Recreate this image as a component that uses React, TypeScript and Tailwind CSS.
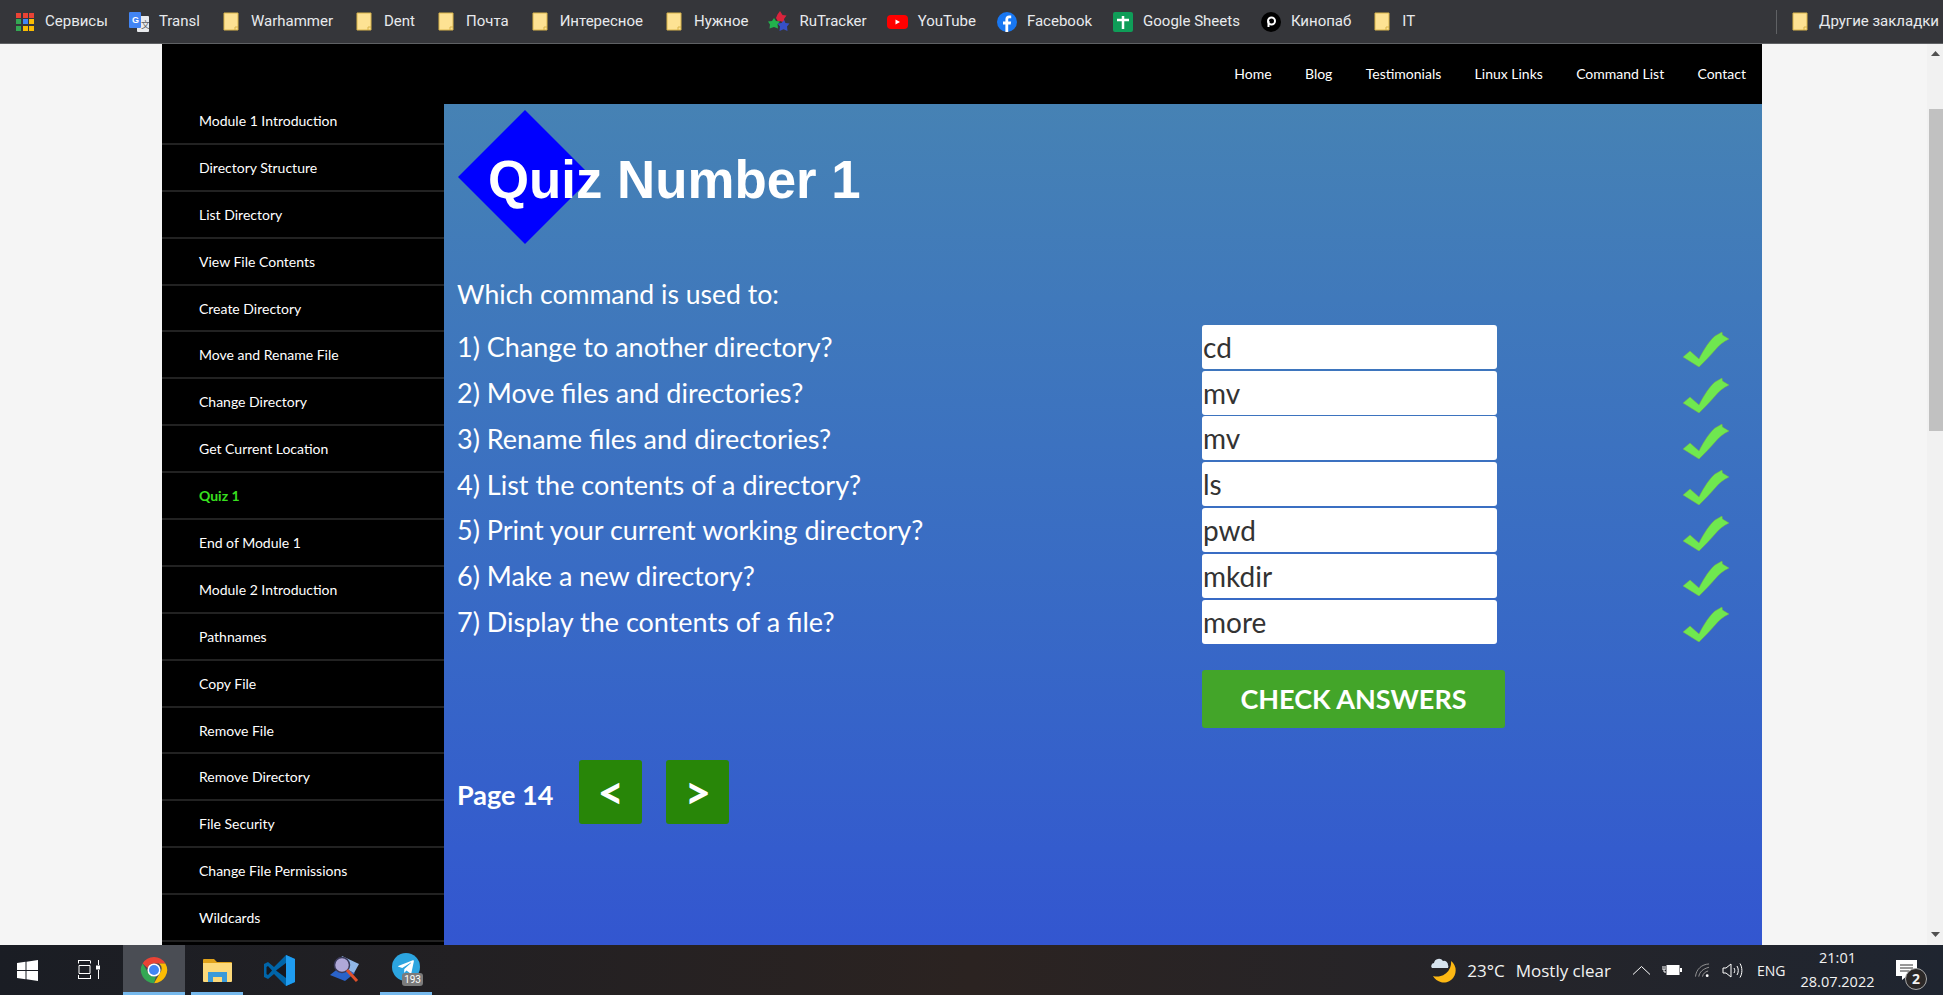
import { FaTelegramPlane } from 'react-icons/fa';

const bookmarks: { label: string; icon: string }[] = [
  { label: 'Сервисы', icon: 'apps' },
  { label: 'Transl', icon: 'translate' },
  { label: 'Warhammer', icon: 'folder' },
  { label: 'Dent', icon: 'folder' },
  { label: 'Почта', icon: 'folder' },
  { label: 'Интересное', icon: 'folder' },
  { label: 'Нужное', icon: 'folder' },
  { label: 'RuTracker', icon: 'rutracker' },
  { label: 'YouTube', icon: 'youtube' },
  { label: 'Facebook', icon: 'facebook' },
  { label: 'Google Sheets', icon: 'sheets' },
  { label: 'Кинопаб', icon: 'kinopub' },
  { label: 'IT', icon: 'folder' },
];

const sideLinks = [
  'Module 1 Introduction',
  'Directory Structure',
  'List Directory',
  'View File Contents',
  'Create Directory',
  'Move and Rename File',
  'Change Directory',
  'Get Current Location',
  'Quiz 1',
  'End of Module 1',
  'Module 2 Introduction',
  'Pathnames',
  'Copy File',
  'Remove File',
  'Remove Directory',
  'File Security',
  'Change File Permissions',
  'Wildcards',
];

const topLinks = ['Home', 'Blog', 'Testimonials', 'Linux Links', 'Command List', 'Contact'];

const questions = [
  { q: '1) Change to another directory?', a: 'cd' },
  { q: '2) Move files and directories?', a: 'mv' },
  { q: '3) Rename files and directories?', a: 'mv' },
  { q: '4) List the contents of a directory?', a: 'ls' },
  { q: '5) Print your current working directory?', a: 'pwd' },
  { q: '6) Make a new directory?', a: 'mkdir' },
  { q: '7) Display the contents of a file?', a: 'more' },
];

function FolderIcon() {
  return (
    <svg width="16" height="19" viewBox="0 0 16 19" className="shrink-0">
      <path d="M1 1h14v17H1z" fill="#fde293" stroke="#d9b44a" strokeWidth="1" />
      <path d="M12 18v-3h3" fill="none" stroke="#d9b44a" strokeWidth="1" />
    </svg>
  );
}

function BookmarkIcon({ name }: { name: string }) {
  if (name === 'folder') return <FolderIcon />;
  if (name === 'apps') {
    const colors = ['#ea4335', '#ea4335', '#ea4335', '#34a853', '#4285f4', '#fbbc04', '#34a853', '#fbbc04', '#fbbc04'];
    return (
      <div className="grid grid-cols-3 gap-[1.5px] w-[18px] h-[18px] shrink-0">
        {colors.map((c, i) => (
          <span key={i} style={{ background: c }} />
        ))}
      </div>
    );
  }
  if (name === 'translate') {
    return (
      <svg width="20" height="20" viewBox="0 0 20 20" className="shrink-0">
        <rect x="8" y="4" width="12" height="16" rx="1" fill="#e8eaed" />
        <rect x="0" y="0" width="12" height="16" rx="1" fill="#4285f4" />
        <text x="3" y="11" fontSize="9" fontWeight="700" fill="#fff" fontFamily="'Liberation Sans', sans-serif">G</text>
        <text x="12" y="16" fontSize="9" fill="#5f6368" fontFamily="'Noto Sans CJK SC', sans-serif">文</text>
      </svg>
    );
  }
  if (name === 'rutracker') {
    return (
      <svg width="22" height="22" viewBox="0 0 22 22" className="shrink-0">
        <path d="M12 0l2.500 4 4 .5-2.500 3.500.5 3.500-4.500-1.500-2 .5-2-3.500 1.500-3.500z" fill="#d9243c" />
        <path d="M6 7l2 3 4 .5-2.500 3 .5 4-4-1.500-4.500 1.500.5-4L0 10.500l4-.5z" fill="#22b24c" />
        <path d="M16 9l1.500 3 4 .5-2.500 3 .5 4.500-4-1.800-4 1.800.5-4.500-2.500-3 4-.5z" fill="#3650c8" />
      </svg>
    );
  }
  if (name === 'youtube') {
    return (
      <svg width="21" height="20" viewBox="0 0 21 20" className="shrink-0">
        <rect x="0" y="3" width="21" height="14" rx="4" fill="#f00" />
        <path d="M8.500 7.500l4.500 2.500-4.500 2.500z" fill="#fff" />
      </svg>
    );
  }
  if (name === 'facebook') {
    return (
      <svg width="20" height="20" viewBox="0 0 20 20" className="shrink-0">
        <circle cx="10" cy="10" r="10" fill="#1877f2" />
        <path d="M11.200 20v-7.500h2.500l.4-3h-2.900V7.700c0-.9.300-1.400 1.500-1.400h1.500V3.600c-.4 0-1.200-.1-2.100-.1-2.200 0-3.700 1.300-3.700 3.800v2.200H6v3h2.400V20z" fill="#fff" />
      </svg>
    );
  }
  if (name === 'sheets') {
    return (
      <svg width="20" height="20" viewBox="0 0 20 20" className="shrink-0">
        <rect x="0" y="0" width="20" height="20" rx="2" fill="#0f9d58" />
        <path d="M4 8h12M10 4v13" stroke="#fff" strokeWidth="2.500" />
      </svg>
    );
  }
  return (
    <svg width="20" height="20" viewBox="0 0 20 20" className="shrink-0">
      <circle cx="10" cy="10" r="10" fill="#000" />
      <circle cx="10.500" cy="9" r="3.500" fill="none" stroke="#fff" strokeWidth="2" />
      <path d="M7.500 9v6" stroke="#fff" strokeWidth="2" />
    </svg>
  );
}

function BookmarksBar() {
  return (
    <div className="h-[44px] shrink-0 bg-[#35363a] border-b border-b-[#5f6164] flex items-center pl-[15px] pr-[4px] text-[#e8eaed] text-[15px] font-['Roboto',sans-serif]">
      <div className="flex items-center gap-[21px]">
        {bookmarks.map((b) => (
          <div key={b.label} className="flex items-center gap-[10px]">
            <div className="w-[20px] flex justify-center">
              <BookmarkIcon name={b.icon} />
            </div>
            <span>{b.label}</span>
          </div>
        ))}
      </div>
      <div className="ml-auto flex items-center gap-[15px]">
        <span className="w-px h-[24px] bg-[#5f6164]" />
        <div className="flex items-center gap-[11px]">
          <FolderIcon />
          <span>Другие закладки</span>
        </div>
      </div>
    </div>
  );
}

function CheckMark() {
  return (
    <svg width="46" height="35" viewBox="0 0 46 35">
      <path
        d="M0 25L7 19 16 27C21 17 27 8 32 4L39 0 39.500 3 46 7C40 10 36 13 33 17 27 24 21 30 16 35Z"
        fill="#6fe84f"
        stroke="#7fae44"
        strokeWidth="0.500"
      />
    </svg>
  );
}

function Sidebar() {
  return (
    <nav className="w-[282px] shrink-0 bg-black -mt-[6px]">
      {sideLinks.map((l) => (
        <div
          key={l}
          className={`h-[46.900px] flex items-center pl-[37px] border-b-2 border-b-[#222222] text-[14px] ${
            l === 'Quiz 1' ? 'text-[#38e01f] font-bold' : 'text-white'
          }`}
        >
          {l}
        </div>
      ))}
    </nav>
  );
}

function Quiz() {
  return (
    <main className="flex-1 h-[841px] bg-gradient-to-b from-[#4682b4] to-[#3356d0] pl-[13px] pr-[33px] text-white">
      <div className="relative h-[176px] pt-[48px] pl-[31px]">
        <svg width="134" height="134" viewBox="0 0 134 134" className="absolute left-[1px] top-[6px]">
          <path d="M67 0l67 67-67 67L0 67z" fill="#0000ff" />
        </svg>
        <h1 className="relative font-['Liberation_Sans',sans-serif] font-bold text-[52.800px] leading-[56px]">Quiz Number 1</h1>
      </div>
      <p className="text-[26.600px] leading-[34px] -mt-[3px] mb-[13px]">Which command is used to:</p>
      <div className="flex flex-col">
        {questions.map((row) => (
          <div key={row.q} className="h-[45.800px] flex items-center">
            <div className="w-[745px] text-[27px] pt-[1px]">{row.q}</div>
            <input
              readOnly
              value={row.a}
              className="w-[295px] h-[44px] bg-white rounded-[3px] px-[1px] text-[28px] text-[#333] font-['Lato',sans-serif] outline-none"
            />
            <div className="ml-auto pt-[6px]">
              <CheckMark />
            </div>
          </div>
        ))}
      </div>
      <div className="pl-[745px] mt-[25px]">
        <button className="w-[303px] h-[58px] bg-[#43a529] rounded-[3px] text-[27px] font-bold pt-[1px]">CHECK ANSWERS</button>
      </div>
      <div className="flex items-center mt-[32px] h-[64px]">
        <span className="text-[27px] font-bold pt-[7px]">Page 14</span>
        <button className="ml-[26px] w-[63px] h-[64px] bg-[#288608] rounded-[3px] text-[46px] leading-none font-bold pt-[1px]">&lt;</button>
        <button className="ml-[24px] w-[63px] h-[64px] bg-[#288608] rounded-[3px] text-[46px] leading-none font-bold pt-[1px]">&gt;</button>
      </div>
    </main>
  );
}

function Scrollbar() {
  return (
    <div className="w-[16px] h-full bg-[#f1f1f1] flex flex-col items-end">
      <div className="h-[18px] w-full flex items-center justify-center">
        <svg width="9" height="5" viewBox="0 0 9 5"><path d="M4.500 0L9 5H0z" fill="#505050" /></svg>
      </div>
      <div className="mt-[47px] w-[14px] h-[322px] bg-[#c1c1c1]" />
      <div className="mt-auto h-[22px] w-full flex items-center justify-center">
        <svg width="9" height="5" viewBox="0 0 9 5"><path d="M0 0h9L4.500 5z" fill="#505050" /></svg>
      </div>
    </div>
  );
}

function TaskbarIcons() {
  return (
    <div className="flex items-stretch h-full">
      <div className="w-[55px] flex items-center justify-center">
        <svg width="21" height="21" viewBox="0 0 21 21"><path d="M0 3l8.500-1.200v8.200H0zM9.500 1.700L21 0v10H9.500zM0 11h8.500v8.200L0 18zM9.500 11H21v10L9.500 19.300z" fill="#fff" /></svg>
      </div>
      <div className="w-[68px] flex items-center justify-center">
        <svg width="22" height="20" viewBox="0 0 22 20" fill="none" stroke="#fff" strokeWidth="1"><path d="M0 .5h12M1 5.500h11v8H1zM0 18.500h12M.5 .5v3M12.500 .5v3M.5 15v4M12.500 15v4M20.500 0v5M20.500 10v9" /><rect x="18.500" y="6" width="3.500" height="3" fill="#fff" /></svg>
      </div>
      <div className="w-[62px] bg-[#4a4d54] border-b-[3px] border-b-[#76b9ed] flex items-center justify-center pt-[3px]">
        <svg width="30" height="30" viewBox="0 0 48 48">
          <path d="M24 3a21 21 0 0 1 18.200 10.500H24a10.500 10.500 0 0 0-10 7.500L5.800 13.500A21 21 0 0 1 24 3z" fill="#ea4335" />
          <path d="M42.200 13.500A21 21 0 0 1 24 45l9-15.500a10.500 10.500 0 0 0-1-16z" fill="#fbbc04" />
          <path d="M24 45A21 21 0 0 1 5.800 13.500L15 29a10.500 10.500 0 0 0 12 5z" fill="#34a853" />
          <circle cx="24" cy="24" r="10.500" fill="#fff" />
          <circle cx="24" cy="24" r="8" fill="#4285f4" />
        </svg>
      </div>
      <div className="ml-[6px] w-[52px] border-b-[3px] border-b-[#76b9ed] flex items-center justify-center pt-[3px]">
        <svg width="29" height="23" viewBox="0 0 29 23">
          <path d="M0 1a1 1 0 0 1 1-1h10l3 3h14a1 1 0 0 1 1 1v3H0z" fill="#e0a21a" />
          <path d="M0 4h29v18a1 1 0 0 1-1 1H1a1 1 0 0 1-1-1z" fill="#fcd97a" />
          <path d="M5 13h19v10h-5v-5h-9v5H5z" fill="#3a9ad9" />
        </svg>
      </div>
      <div className="ml-[2px] w-[68px] flex items-center justify-center">
        <svg width="31" height="31" viewBox="0 0 31 31">
          <path d="M22 0l9 4v23l-9 4-12-12-6 5-4-2V9l4-2 6 5z" fill="#0065a9" />
          <path d="M22 0l9 4v23l-9 4z" fill="#1f9cf0" />
          <path d="M22 8L12 15.500 22 23z" fill="#16181f" />
          <path d="M4 11l4 4.500-4 4.500-1.500-1v-7z" fill="#16181f" />
        </svg>
      </div>
      <div className="w-[64px] flex items-center justify-center">
        <svg width="30" height="30" viewBox="0 0 30 30">
          <path d="M0 20L15 26l10-8L10 12z" fill="#2a62c8" />
          <path d="M12 1l17 8-5 9-15-8z" fill="#8fb6e6" />
          <circle cx="12" cy="10" r="7.500" fill="#b0a8d8" stroke="#3a3a5a" strokeWidth="1.500" />
          <path d="M17 15l10 11" stroke="#e0502a" strokeWidth="3" />
        </svg>
      </div>
      <div className="relative ml-[3px] w-[52px] border-b-[3px] border-b-[#76b9ed] flex items-center justify-center">
        <div className="w-[28px] h-[28px] rounded-full bg-[#2ca5e0] flex items-center justify-center mb-[3px]">
          <FaTelegramPlane className="text-white text-[18px]" />
        </div>
        <span className="absolute right-[9px] bottom-[6px] bg-[#7b7b7b] rounded-[3px] px-[2px] text-[10px] leading-[13px] text-white font-['Roboto',sans-serif]">193</span>
      </div>
    </div>
  );
}

function Tray() {
  return (
    <div className="ml-auto flex items-center h-full text-[#f2f2f2] font-['Open_Sans',sans-serif]">
      <svg width="28" height="27" viewBox="0 0 28 27" className="mr-[9px]">
        <path d="M21 4a12 12 0 1 1-18 15A14 14 0 0 0 21 4z" fill="#fdb813" />
        <path d="M2 11a3 3 0 0 1 2-5 5 5 0 0 1 9-2 4 4 0 0 1 5 4 3 3 0 0 1 0 3z" fill="#d7e3ee" />
      </svg>
      <span className="text-[17px] mr-[11px] pt-[2px]">23°C</span>
      <span className="text-[17px] mr-[22px] pt-[2px]">Mostly clear</span>
      <svg width="17" height="9" viewBox="0 0 17 9" fill="none" stroke="#fff" strokeWidth="1" className="mr-[12px]"><path d="M0 8.500l8.500-8 8.500 8" /></svg>
      <svg width="20" height="12" viewBox="0 0 20 12" className="mr-[13px]">
        <path d="M0 3h4M0 5h4M2 5v3h2" stroke="#fff" fill="none" />
        <rect x="4.500" y="1" width="13" height="10" fill="#fff" />
        <rect x="18" y="4" width="2" height="4" fill="#fff" />
      </svg>
      <svg width="15" height="15" viewBox="0 0 16 15" fill="none" stroke="#9a9a9a" className="mr-[12px]">
        <path d="M.5 14C1.500 6 7 1 15 .5M4 14c1-5 4-8 11-10M8 14c.5-3 2.500-5 6-6" />
        <circle cx="13" cy="13" r="1.500" fill="#fff" stroke="none" />
      </svg>
      <svg width="21" height="15" viewBox="0 0 20 15" fill="none" stroke="#fff" className="mr-[14px]">
        <path d="M.5 5h3l5-4v13l-5-4h-3zM11.500 5c1 1.500 1 3.500 0 5M14.500 3c1.700 2.500 1.700 6.500 0 9M17.500 .5c2.500 4 2.500 10 0 14" />
      </svg>
      <span className="text-[14px] w-[45px]">ENG</span>
      <div className="flex flex-col items-center w-[71px] text-[14.500px] leading-[24px] mr-[23px]">
        <span>21:01</span>
        <span>28.07.2022</span>
      </div>
      <div className="relative w-[36px] mr-[11px]">
        <svg width="21" height="20" viewBox="0 0 21 20">
          <path d="M0 0h21v16h-10l-5 4v-4H0z" fill="#fff" />
          <path d="M4 5h13M4 8h13M4 11h9" stroke="#333" strokeWidth="1" />
        </svg>
        <span className="absolute left-[9px] top-[8px] w-[22px] h-[22px] rounded-full bg-[#2b2827] border border-[#aaa] text-[14px] font-bold leading-[20px] text-center">2</span>
      </div>
    </div>
  );
}

export default function App() {
  return (
    <div className="h-[995px] w-[1943px] flex flex-col overflow-hidden font-['Lato',sans-serif] bg-[#f5f5f5]">
      <BookmarksBar />
      <div className="flex-1 min-h-0 flex">
        <div className="w-[162px] shrink-0" />
        <div className="w-[1600px] shrink-0 flex flex-col overflow-hidden bg-black">
          <header className="h-[60px] shrink-0 flex items-center justify-end gap-[33.300px] pr-[16px] pb-[2px] text-white text-[14px]">
            {topLinks.map((l) => (
              <span key={l}>{l}</span>
            ))}
          </header>
          <div className="flex flex-1 min-h-0">
            <Sidebar />
            <Quiz />
          </div>
        </div>
        <div className="flex-1 flex justify-end">
          <Scrollbar />
        </div>
      </div>
      <footer className="h-[50px] shrink-0 bg-gradient-to-r from-[#1a1d24] via-[#2b2321] to-[#1f2530] flex items-stretch">
        <TaskbarIcons />
        <Tray />
      </footer>
    </div>
  );
}
